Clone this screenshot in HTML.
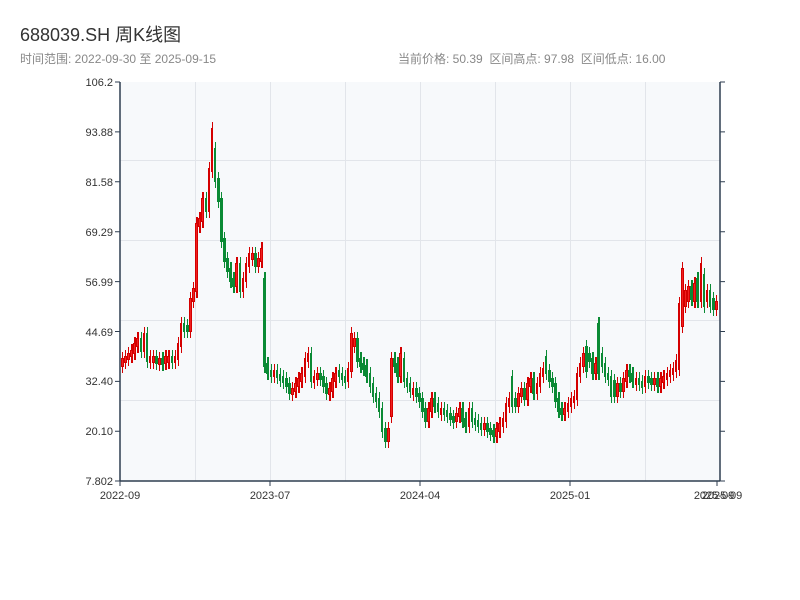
<!DOCTYPE html>
<html><head><meta charset="utf-8"><style>
body{margin:0;width:800px;height:600px;background:#fff;font-family:"Liberation Sans","Noto Sans CJK SC",sans-serif;overflow:hidden;position:relative}
svg{position:absolute;left:0;top:0}
#k{position:absolute;left:121px;top:0;width:597px;height:481px;display:flex}
#k i{flex:1;position:relative;display:block}
#k i::before{content:"";position:absolute;left:1px;width:1.3px;top:calc(min(var(--o),var(--c))*1px - 8px);height:calc(max(var(--o) - var(--c),var(--c) - var(--o),3)*1px + 16px);background:var(--k)}
#k i::after{content:"";position:absolute;left:0;width:2.6px;box-sizing:border-box;top:calc(min(var(--o),var(--c))*1px - 2px);height:calc(max(var(--o) - var(--c),var(--c) - var(--o),3)*1px + 4px);background:var(--f);border:0.7px solid var(--k)}
#k i.u{--k:#d40000;--f:#f02020}
#k i.d{--k:#0a8a34;--f:#0a8a34}
</style></head><body>
<svg width="800" height="600" xmlns="http://www.w3.org/2000/svg" font-family="Liberation Sans, Noto Sans CJK SC, sans-serif">
<text x="20" y="41" font-size="18" fill="#333">688039.SH 周K线图</text>
<text x="20" y="63" font-size="12" fill="#888">时间范围: 2022-09-30 至 2025-09-15</text>
<text x="398" y="63" font-size="12" fill="#888" xml:space="preserve">当前价格: 50.39  区间高点: 97.98  区间低点: 16.00</text>
<rect x="120" y="82" width="600" height="399" fill="#f7f9fb"/>
<g stroke="#e2e5ea" stroke-width="1">
<line x1="120" y1="160.5" x2="720" y2="160.5"/><line x1="120" y1="240.5" x2="720" y2="240.5"/><line x1="120" y1="320.5" x2="720" y2="320.5"/><line x1="120" y1="400.5" x2="720" y2="400.5"/>
<line x1="195.5" y1="82" x2="195.5" y2="481"/><line x1="270.5" y1="82" x2="270.5" y2="481"/><line x1="345.5" y1="82" x2="345.5" y2="481"/><line x1="420.5" y1="82" x2="420.5" y2="481"/><line x1="495.5" y1="82" x2="495.5" y2="481"/><line x1="570.5" y1="82" x2="570.5" y2="481"/><line x1="645.5" y1="82" x2="645.5" y2="481"/>
</g>
</svg>
<div id="k">
<i class=u style=--o:365;--c:360></i><i class=u style=--o:360;--c:358></i><i class=u style=--o:358;--c:355></i><i class=u style=--o:355;--c:352></i><i class=u style=--o:352;--c:345></i><i class=u style=--o:345;--c:340></i><i class=d style=--o:340;--c:350></i><i class=u style=--o:350;--c:335></i><i class=d style=--o:335;--c:360></i><i class=u style=--o:360;--c:358></i><i class=u style=--o:360;--c:358></i><i class=d style=--o:358;--c:362></i><i class=u style=--o:362;--c:360></i><i class=d style=--o:360;--c:362></i><i class=u style=--o:362;--c:358></i><i class=u style=--o:360;--c:358></i><i class=d style=--o:358;--c:360></i><i class=u style=--o:360;--c:358></i><i class=u style=--o:358;--c:345></i><i class=u style=--o:345;--c:325></i><i class=d style=--o:325;--c:330></i><i class=d style=--o:327;--c:330></i><i class=u style=--o:330;--c:300></i><i class=u style=--o:300;--c:290></i><i class=u style=--o:290;--c:225></i><i class=u style=--o:225;--c:220></i><i class=u style=--o:220;--c:200></i><i class=d style=--o:200;--c:210></i><i class=u style=--o:210;--c:170></i><i class=u style=--o:170;--c:130></i><i class=d style=--o:150;--c:180></i><i class=d style=--o:180;--c:200></i><i class=d style=--o:200;--c:240></i><i class=d style=--o:240;--c:260></i><i class=d style=--o:260;--c:270></i><i class=d style=--o:270;--c:280></i><i class=d style=--o:280;--c:285></i><i class=u style=--o:285;--c:265></i><i class=d style=--o:265;--c:290></i><i class=u style=--o:290;--c:280></i><i class=u style=--o:280;--c:265></i><i class=u style=--o:265;--c:255></i><i class=u style=--o:258;--c:255></i><i class=d style=--o:255;--c:265></i><i class=u style=--o:265;--c:260></i><i class=u style=--o:260;--c:250></i><i class=d style=--o:280;--c:365></i><i class=d style=--o:365;--c:372></i><i class=d style=--o:372;--c:375></i><i class=u style=--o:375;--c:372></i><i class=d style=--o:372;--c:376></i><i class=d style=--o:376;--c:378></i><i class=d style=--o:378;--c:380></i><i class=d style=--o:380;--c:385></i><i class=d style=--o:385;--c:392></i><i class=u style=--o:392;--c:390></i><i class=u style=--o:390;--c:385></i><i class=u style=--o:385;--c:380></i><i class=u style=--o:380;--c:375></i><i class=u style=--o:375;--c:360></i><i class=u style=--o:360;--c:355></i><i class=d style=--o:355;--c:380></i><i class=u style=--o:380;--c:378></i><i class=u style=--o:378;--c:375></i><i class=d style=--o:375;--c:378></i><i class=d style=--o:378;--c:385></i><i class=d style=--o:385;--c:392></i><i class=u style=--o:392;--c:390></i><i class=u style=--o:390;--c:380></i><i class=u style=--o:380;--c:375></i><i class=d style=--o:372;--c:375></i><i class=d style=--o:375;--c:378></i><i class=d style=--o:378;--c:380></i><i class=u style=--o:380;--c:370></i><i class=u style=--o:370;--c:335></i><i class=u style=--o:345;--c:340></i><i class=d style=--o:340;--c:360></i><i class=d style=--o:360;--c:365></i><i class=d style=--o:365;--c:367></i><i class=d style=--o:367;--c:375></i><i class=d style=--o:375;--c:385></i><i class=d style=--o:385;--c:395></i><i class=d style=--o:395;--c:400></i><i class=d style=--o:400;--c:410></i><i class=d style=--o:410;--c:430></i><i class=d style=--o:430;--c:440></i><i class=u style=--o:440;--c:430></i><i class=u style=--o:415;--c:360></i><i class=d style=--o:360;--c:365></i><i class=d style=--o:365;--c:375></i><i class=u style=--o:375;--c:355></i><i class=d style=--o:360;--c:380></i><i class=d style=--o:380;--c:385></i><i class=d style=--o:385;--c:390></i><i class=u style=--o:392;--c:390></i><i class=d style=--o:390;--c:395></i><i class=d style=--o:395;--c:400></i><i class=d style=--o:400;--c:410></i><i class=d style=--o:410;--c:420></i><i class=u style=--o:420;--c:410></i><i class=u style=--o:410;--c:400></i><i class=d style=--o:400;--c:405></i><i class=d style=--o:405;--c:410></i><i class=u style=--o:412;--c:410></i><i class=d style=--o:410;--c:412></i><i class=d style=--o:412;--c:415></i><i class=d style=--o:415;--c:418></i><i class=d style=--o:418;--c:420></i><i class=u style=--o:420;--c:415></i><i class=u style=--o:415;--c:410></i><i class=d style=--o:410;--c:420></i><i class=d style=--o:420;--c:425></i><i class=u style=--o:425;--c:410></i><i class=d style=--o:410;--c:420></i><i class=d style=--o:420;--c:422></i><i class=d style=--o:422;--c:425></i><i class=d style=--o:425;--c:428></i><i class=u style=--o:428;--c:425></i><i class=d style=--o:425;--c:430></i><i class=d style=--o:430;--c:432></i><i class=d style=--o:432;--c:435></i><i class=u style=--o:435;--c:430></i><i class=u style=--o:430;--c:425></i><i class=u style=--o:425;--c:420></i><i class=u style=--o:420;--c:405></i><i class=u style=--o:405;--c:400></i><i class=d style=--o:378;--c:405></i><i class=d style=--o:400;--c:405></i><i class=u style=--o:405;--c:395></i><i class=u style=--o:395;--c:390></i><i class=d style=--o:390;--c:398></i><i class=u style=--o:398;--c:385></i><i class=u style=--o:385;--c:380></i><i class=d style=--o:380;--c:392></i><i class=u style=--o:392;--c:385></i><i class=u style=--o:385;--c:375></i><i class=u style=--o:375;--c:370></i><i class=d style=--o:358;--c:372></i><i class=d style=--o:372;--c:380></i><i class=d style=--o:380;--c:385></i><i class=d style=--o:385;--c:400></i><i class=d style=--o:400;--c:410></i><i class=d style=--o:410;--c:412></i><i class=u style=--o:412;--c:410></i><i class=u style=--o:410;--c:405></i><i class=u style=--o:405;--c:400></i><i class=u style=--o:400;--c:398></i><i class=u style=--o:398;--c:375></i><i class=u style=--o:375;--c:365></i><i class=u style=--o:365;--c:355></i><i class=d style=--o:348;--c:370></i><i class=d style=--o:355;--c:360></i><i class=d style=--o:360;--c:372></i><i class=u style=--o:372;--c:365></i><i class=d style=--o:325;--c:372></i><i class=d style=--o:355;--c:365></i><i class=d style=--o:365;--c:375></i><i class=d style=--o:375;--c:378></i><i class=d style=--o:378;--c:395></i><i class=d style=--o:382;--c:395></i><i class=u style=--o:395;--c:385></i><i class=d style=--o:385;--c:390></i><i class=u style=--o:390;--c:380></i><i class=u style=--o:380;--c:372></i><i class=d style=--o:372;--c:375></i><i class=d style=--o:375;--c:380></i><i class=u style=--o:383;--c:380></i><i class=d style=--o:380;--c:383></i><i class=d style=--o:383;--c:385></i><i class=u style=--o:385;--c:378></i><i class=d style=--o:378;--c:380></i><i class=d style=--o:380;--c:382></i><i class=u style=--o:382;--c:380></i><i class=d style=--o:380;--c:385></i><i class=u style=--o:385;--c:380></i><i class=u style=--o:380;--c:378></i><i class=u style=--o:378;--c:375></i><i class=u style=--o:375;--c:372></i><i class=u style=--o:372;--c:370></i><i class=u style=--o:370;--c:362></i><i class=u style=--o:368;--c:305></i><i class=u style=--o:325;--c:270></i><i class=u style=--o:305;--c:292></i><i class=u style=--o:300;--c:288></i><i class=d style=--o:288;--c:298></i><i class=u style=--o:300;--c:285></i><i class=d style=--o:280;--c:300></i><i class=u style=--o:300;--c:265></i><i class=d style=--o:276;--c:305></i><i class=u style=--o:300;--c:292></i><i class=d style=--o:292;--c:305></i><i class=d style=--o:300;--c:308></i><i class=u style=--o:308;--c:303></i>
</div>
<svg width="800" height="600" xmlns="http://www.w3.org/2000/svg" font-family="Liberation Sans, Noto Sans CJK SC, sans-serif">
<g stroke="#2f3e50" stroke-width="1.5">
<line x1="120" y1="82" x2="120" y2="481.5"/><line x1="720" y1="82" x2="720" y2="481.5"/><line x1="120" y1="481" x2="720" y2="481"/>
</g>
<g stroke="#2f3e50" stroke-width="1">
<path d="M115 82H120M115 131.9H120M115 181.8H120M115 231.7H120M115 281.6H120M115 331.5H120M115 381.4H120M115 431.3H120M115 481H120M720 82H725M720 131.9H725M720 181.8H725M720 231.7H725M720 281.6H725M720 331.5H725M720 381.4H725M720 431.3H725M720 481H725M120 481V486M270 481V486M420 481V486M570 481V486M717 481V486"/>
</g>
<g font-size="11" fill="#333" text-anchor="end">
<text x="113" y="86">106.2</text><text x="113" y="136">93.88</text><text x="113" y="186">81.58</text><text x="113" y="236">69.29</text><text x="113" y="286">56.99</text><text x="113" y="336">44.69</text><text x="113" y="385">32.40</text><text x="113" y="435">20.10</text><text x="113" y="485">7.802</text>
</g>
<g font-size="11" fill="#333" text-anchor="middle">
<text x="120" y="499">2022-09</text><text x="270" y="499">2023-07</text><text x="420" y="499">2024-04</text><text x="570" y="499">2025-01</text><text x="714" y="499">2025-09</text><text x="722" y="499">2025-09</text>
</g>
</svg>
</body></html>
